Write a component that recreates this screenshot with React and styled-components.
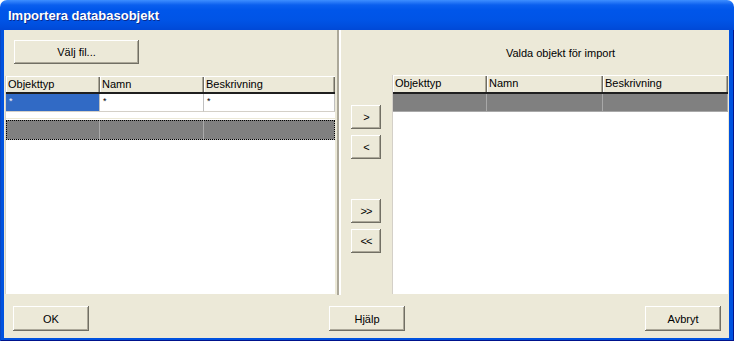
import React from "react";
import styled, { createGlobalStyle } from "styled-components";

const GlobalStyle = createGlobalStyle`
  html, body {
    margin: 0;
    padding: 0;
    background: #ffffff;
  }
  * {
    box-sizing: border-box;
  }
`;

const leftColumns = ["Objekttyp", "Namn", "Beskrivning"];

const Window = styled.div`
  width: 734px;
  height: 341px;
  display: flex;
  flex-direction: column;
  border-radius: 7px 7px 0 0;
  overflow: hidden;
  font-family: "Liberation Sans", Arial, sans-serif;
  font-size: 11px;
  color: #000;
`;

const TitleBar = styled.div`
  height: 30px;
  flex: none;
  display: flex;
  align-items: center;
  padding-left: 8px;
  background: linear-gradient(
    180deg,
    #3d8fff 0px,
    #2a7bf8 2px,
    #0a5fee 5px,
    #0056ea 10px,
    #0054e6 20px,
    #004ddc 27px,
    #0048d6 30px
  );
`;

const Title = styled.span`
  font: bold 13px "Liberation Sans", Arial, sans-serif;
  color: #ffffff;
  text-shadow: 1px 1px 0 #0b2a8c;
  padding-top: 1px;
`;

const Frame = styled.div`
  flex: 1;
  display: flex;
  padding: 0 5px 3px 4px;
  background: #0052df;
  box-shadow: inset 1px 0 #0847c4, inset -1px -1px #00138c;
`;

const Client = styled.div`
  flex: 1;
  display: flex;
  flex-direction: column;
  background: #ece9d8;
`;

const Main = styled.div`
  height: 265px;
  flex: none;
  display: flex;
`;

const LeftPane = styled.div`
  width: 332px;
  display: flex;
  flex-direction: column;
`;

const Splitter = styled.div`
  width: 5px;
  flex: none;
  border-left: 1px solid #ece9d8;
  background: linear-gradient(90deg, #aca899 0, #aca899 2px, #ffffff 2px, #ffffff 4px);
`;

const RightPane = styled.div`
  flex: 1;
  display: flex;
`;

const Footer = styled.div`
  flex: 1;
  display: flex;
  justify-content: space-between;
  align-items: flex-start;
  padding: 11px 8px 0 9px;
`;

const Button = styled.button`
  width: ${(p) => p.$w || 76}px;
  height: ${(p) => p.$h || 25}px;
  flex: none;
  padding: 0;
  margin: ${(p) => p.$margin || "0"};
  border: none;
  background: #ece9d8;
  box-shadow: inset -1px -1px #716f64, inset 1px 1px #ffffff, inset -2px -2px #aca899;
  font: 11px "Liberation Sans", Arial, sans-serif;
  color: #000;
  letter-spacing: ${(p) => (p.$arrow ? "-1px" : "0")};
`;

const Grid = styled.div`
  flex: 1;
  margin: ${(p) => p.$margin};
  background: #ffffff;
  display: flex;
  flex-direction: column;
  border-left: 1px solid #d4d0c8;
`;

const Row = styled.div`
  display: grid;
  grid-template-columns: ${(p) => p.$cols};
  height: ${(p) => p.$h}px;
  flex: none;
`;

const HeaderCell = styled.div`
  padding-left: 2px;
  line-height: ${(p) => p.$h - 2}px;
  background: #ece9d8;
  box-shadow: inset 1px 1px #ffffff, inset -1px 0 #716f64, inset -2px 0 #aca899;
  border-bottom: 2px solid #1f1f1f;
  white-space: nowrap;
  overflow: hidden;
`;

const DataCell = styled.div`
  padding-left: 3px;
  line-height: 15px;
  background: ${(p) => (p.$selected ? "#316ac5" : "#ffffff")};
  color: ${(p) => (p.$selected ? "#ffffff" : "#000")};
  border-right: 1px solid #c0c0c0;
  border-bottom: 1px solid #d4d0c8;
  font-size: 9px;
`;

const Gap = styled.div`
  height: 7px;
  flex: none;
  border-bottom: 1px solid #ece9d8;
`;

const GrayRow = styled.div`
  display: grid;
  grid-template-columns: ${(p) => p.$cols};
  height: ${(p) => p.$h}px;
  flex: none;
  margin-top: ${(p) => p.$top || 0}px;
  background: #808080;
  outline: ${(p) => (p.$focus ? "1px dotted #000" : "none")};
  outline-offset: -1px;
`;

const GrayCell = styled.div`
  border-right: 1px solid #a8a8a8;
  border-bottom: 1px solid #a8a8a8;
`;

const ButtonColumn = styled.div`
  width: 51px;
  flex: none;
  display: flex;
  flex-direction: column;
  padding: 75px 0 0 10px;
  gap: 6px;
`;

const GridColumn = styled.div`
  flex: 1;
  display: flex;
  flex-direction: column;
`;

const Label = styled.div`
  height: 45px;
  flex: none;
  text-align: center;
  padding-top: 17px;
`;

const Header = ({ cols, h }) => (
  <Row $cols={cols} $h={h}>
    {leftColumns.map((c) => (
      <HeaderCell key={c} $h={h}>
        {c}
      </HeaderCell>
    ))}
  </Row>
);

const App = () => {
  const leftCols = "94px 104px 1fr";
  const rightCols = "94px 116px 1fr";

  return (
    <>
      <GlobalStyle />
      <Window>
        <TitleBar>
          <Title>Importera databasobjekt</Title>
        </TitleBar>
        <Frame>
          <Client>
            <Main>
              <LeftPane>
                <Button $w={125} $h={24} $margin="10px 0 0 10px">
                  Välj fil...
                </Button>
                <Grid $margin="12px 1px 1px 1px">
                  <Header cols={leftCols} h={18} />
                  <Row $cols={leftCols} $h={18}>
                    <DataCell $selected>*</DataCell>
                    <DataCell>*</DataCell>
                    <DataCell>*</DataCell>
                  </Row>
                  <Gap />
                  <GrayRow $cols={leftCols} $h={20} $top={1} $focus>
                    <GrayCell />
                    <GrayCell />
                    <GrayCell />
                  </GrayRow>
                </Grid>
              </LeftPane>
              <Splitter />
              <RightPane>
                <ButtonColumn>
                  <Button $w={30} $h={24} $arrow>&gt;</Button>
                  <Button $w={30} $h={24} $arrow>&lt;</Button>
                  <Button $w={30} $h={24} $arrow $margin="34px 0 0 0">
                    &gt;&gt;
                  </Button>
                  <Button $w={30} $h={24} $arrow>&lt;&lt;</Button>
                </ButtonColumn>
                <GridColumn>
                  <Label>Valda objekt för import</Label>
                  <Grid $margin="0 1px 1px 0">
                    <Header cols={rightCols} h={19} />
                    <GrayRow $cols={rightCols} $h={18}>
                      <GrayCell />
                      <GrayCell />
                      <GrayCell />
                    </GrayRow>
                  </Grid>
                </GridColumn>
              </RightPane>
            </Main>
            <Footer>
              <Button>OK</Button>
              <Button>Hjälp</Button>
              <Button>Avbryt</Button>
            </Footer>
          </Client>
        </Frame>
      </Window>
    </>
  );
};

export default App;
